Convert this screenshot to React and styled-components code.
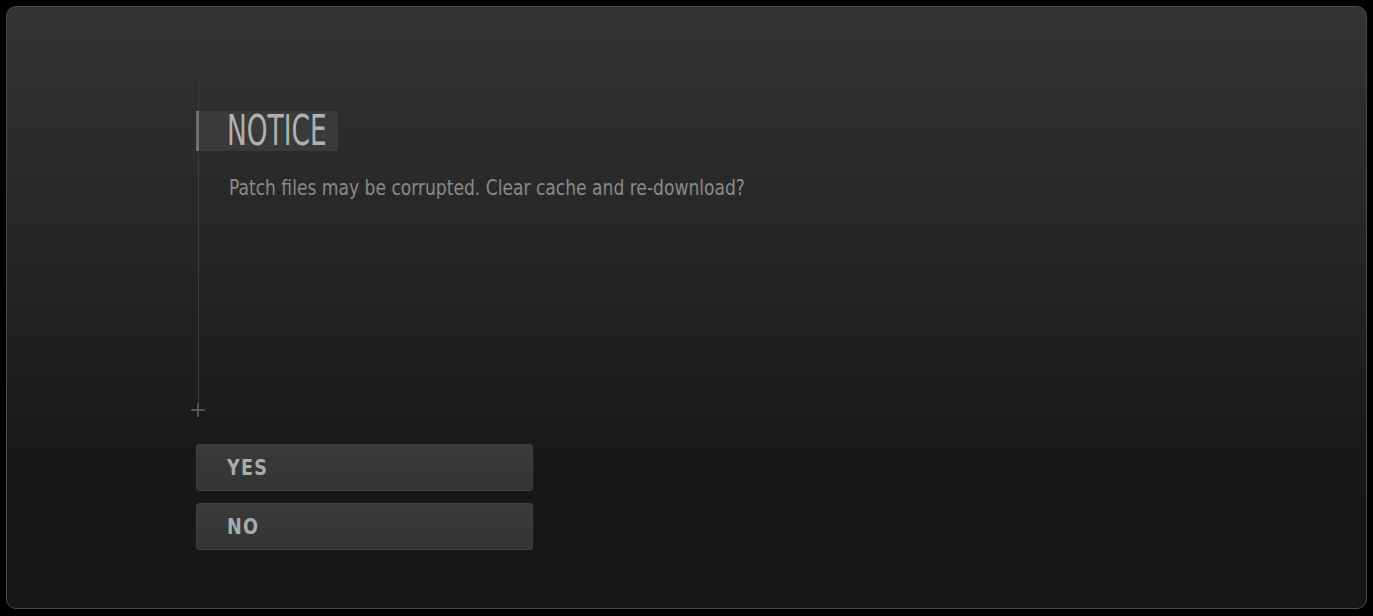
import React from "react";
import styled, { createGlobalStyle } from "styled-components";

const GlobalStyle = createGlobalStyle`
  html, body {
    margin: 0;
    padding: 0;
    background: #000;
  }
  body {
    font-family: "DejaVu Sans Condensed", "DejaVu Sans", sans-serif;
  }
`;

const Screen = styled.div`
  width: 1373px;
  height: 616px;
  padding: 6px;
  box-sizing: border-box;
`;

const Panel = styled.div`
  height: 603px;
  box-sizing: border-box;
  border: 1px solid #4a4a4a;
  border-radius: 10px;
  background: linear-gradient(180deg, #333333 0%, #262626 40%, #181818 75%, #161616 100%);
  padding: 70px 0 0 189px;
  display: flex;
  flex-direction: column;
  align-items: flex-start;
`;

/* thin guide line running down the left of the notice */
const Rail = styled.div`
  margin-left: 2px;
  border-left: 1px solid #3c3c3c;
  height: 326px;
  padding-top: 34px;
  box-sizing: border-box;
  display: flex;
  flex-direction: column;
  align-items: flex-start;
`;

const TitleTag = styled.div`
  margin-left: -3px;
  height: 40px;
  width: 142px;
  box-sizing: border-box;
  border-left: 3px solid #6b716b;
  border-radius: 0 3px 3px 0;
  background: #3a3a3a;
  display: flex;
  align-items: center;
  padding-left: 28px;
`;

const Title = styled.h1`
  margin: 0;
  font-family: "DejaVu Sans Condensed", "DejaVu Sans", sans-serif;
  font-weight: normal;
  font-size: 42px;
  line-height: 40px;
  color: #b1b1b1;
  transform: scaleX(0.7);
  transform-origin: left center;
  white-space: nowrap;
`;

const Message = styled.p`
  margin: 24px 0 0 30px;
  font-size: 22px;
  line-height: 26px;
  color: #8a8a8a;
  transform: scaleX(0.865);
  transform-origin: left center;
  white-space: nowrap;
`;

const Plus = styled.svg`
  display: block;
  margin: 0 0 0 -5px;
`;

const Buttons = styled.div`
  margin-top: 27px;
  display: flex;
  flex-direction: column;
  gap: 12px;
`;

const Button = styled.button`
  width: 337px;
  height: 47px;
  box-sizing: border-box;
  border: 1px solid #404040;
  border-radius: 3px;
  background: linear-gradient(180deg, #3a3a3a 0%, #343434 100%);
  text-align: left;
  padding: 0 0 0 30px;
  cursor: pointer;
`;

const Label = styled.span`
  display: inline-block;
  font-family: "DejaVu Sans", sans-serif;
  font-weight: bold;
  font-size: 22px;
  letter-spacing: 1.5px;
  color: #a7ada7;
  transform: scaleX(0.8);
  transform-origin: left center;
`;

export default function App() {
  return (
    <>
      <GlobalStyle />
      <Screen>
        <Panel>
          <Rail>
            <TitleTag>
              <Title>NOTICE</Title>
            </TitleTag>
            <Message>Patch files may be corrupted. Clear cache and re-download?</Message>
          </Rail>
          <Plus width="14" height="14" viewBox="0 0 14 14">
            <path d="M7 0v14M0 7h14" stroke="#555" strokeWidth="2" />
          </Plus>
          <Buttons>
            <Button><Label>YES</Label></Button>
            <Button><Label>NO</Label></Button>
          </Buttons>
        </Panel>
      </Screen>
    </>
  );
}
